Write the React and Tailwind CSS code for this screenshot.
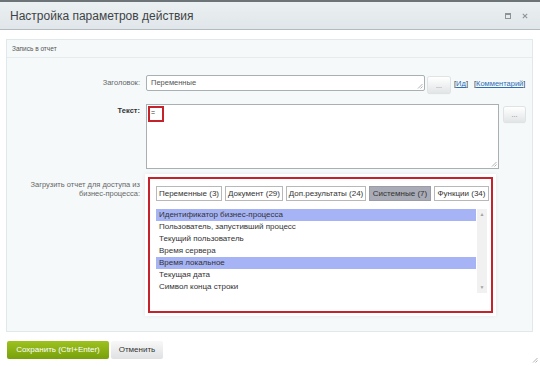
import React from 'react';

const tabs = [
  { label: 'Переменные (3)', w: 'w-[66px]' },
  { label: 'Документ (29)', w: 'w-[58px]' },
  { label: 'Доп.результаты (24)', w: 'w-[80px]' },
  { label: 'Системные (7)', w: 'w-[62px]', active: true },
  { label: 'Функции (34)', w: 'w-[55px]' },
];

const items = [
  { label: 'Идентификатор бизнес-процесса', selected: true },
  { label: 'Пользователь, запустивший процесс' },
  { label: 'Текущий пользователь' },
  { label: 'Время сервера' },
  { label: 'Время локальное', selected: true },
  { label: 'Текущая дата' },
  { label: 'Символ конца строки' },
];

// tiny resize grip used in inputs and the window corner
const Grip = ({ className }) => (
  <svg className={className} width="6" height="6" viewBox="0 0 6 6">
    <path d="M5.5 1 L1 5.5 M5.5 3.5 L3.5 5.5" stroke="#9aa0a3" strokeWidth="0.8" />
  </svg>
);

const DotsButton = ({ className = '' }) => (
  <div className={`flex items-center justify-center rounded-[2px] bg-gradient-to-b from-white to-[#e2e5e6] shadow-[0_0_0_1px_#dfe3e4,0_1px_1px_rgba(0,0,0,0.15)] text-[7px] leading-none text-[#777] ${className}`}>
    ...
  </div>
);

export default function App() {
  return (
    <div className="w-[540px] h-[366px] bg-white relative overflow-hidden font-['Liberation_Sans',Arial,sans-serif]">
      {/* Window header */}
      <div className="h-[30px] border-t-2 border-t-[#6d7477] border-b border-b-[#b4bbbe] bg-gradient-to-b from-[#ebf0f2] to-[#e0e6e9] flex items-center justify-between pl-[10px] pr-[12px]">
        <span className="text-[12px] text-[#3e4346]">Настройка параметров действия</span>
        <div className="flex items-center gap-[11px]">
          <svg width="6" height="6" viewBox="0 0 6 6">
            <rect x="0.5" y="0.5" width="5" height="5" fill="none" stroke="#8d9497" strokeWidth="1" />
            <path d="M0.5 1.5 H5.5" stroke="#8d9497" strokeWidth="1" />
          </svg>
          <svg width="6" height="6" viewBox="0 0 6 6">
            <path d="M0.8 0.8 L5.2 5.2 M5.2 0.8 L0.8 5.2" stroke="#8d9497" strokeWidth="1.1" />
          </svg>
        </div>
      </div>

      <div className="px-[6px] pt-[9px]">
        {/* Settings panel */}
        <div className="w-[527px] h-[293px] border border-[#e1e8ea] bg-[#f5f9fa]">
          <div className="h-[18px] border-b border-[#e6eced] flex items-center pl-[5px] text-[6.5px] text-[#555]">
            Запись в отчет
          </div>

          {/* Row: title */}
          <div className="flex items-start mt-[17px]">
            <div className="w-[133px] h-[16px] flex items-center justify-end text-[7.5px] text-[#666]">Заголовок:</div>
            <div className="ml-[6px] w-[279px] h-[16px] relative rounded-[2px] border border-[#a9b0b3] bg-white flex items-center pl-[4px] text-[7.5px] text-[#555]">
              Переменные
              <Grip className="absolute right-[1px] bottom-[1px]" />
            </div>
            <DotsButton className="ml-[3px] mt-[2px] w-[22px] h-[16px]" />
            <div className="ml-[4px] h-[18px] flex items-center text-[7.5px] text-[#333]">
              [<span className="text-[#2c6db5] underline">Ид</span>]
            </div>
            <div className="ml-[6px] h-[18px] flex items-center text-[7.5px] text-[#333]">
              [<span className="text-[#2c6db5] underline">Комментарий</span>]
            </div>
          </div>

          {/* Row: text */}
          <div className="flex items-start mt-[11px]">
            <div className="w-[133px] pt-[1px] text-right text-[7.5px] font-bold text-[#333]">Текст:</div>
            <div className="ml-[6px] w-[353px] h-[65px] relative border border-[#a9b0b3] bg-white">
              <div className="absolute left-[1px] top-[1px] w-[16px] h-[16px] border-2 border-[#c4232b] text-[7px] leading-none pl-[1px] pt-[1px] text-[#333]">
                =
              </div>
              <Grip className="absolute right-[1px] bottom-[1px]" />
            </div>
            <DotsButton className="ml-[5px] mt-[3px] w-[21px] h-[15px]" />
          </div>

          {/* Row: load report */}
          <div className="flex items-start mt-[8px]">
            <div className="w-[133px] pt-[3px] text-right text-[7.5px] leading-[9px] text-[#666]">
              Загрузить отчет для доступа из<br />бизнес-процесса:
            </div>
            <div className="ml-[8px] w-[345px] h-[136px] border-2 border-[#c4232b] bg-white shadow-[0_0_0_3px_#ffffff,0_0_4px_3px_rgba(0,0,0,0.08)] pt-[7px] pl-[6px]">
              <div className="flex gap-[3px]">
                {tabs.map((tab) => (
                  <div
                    key={tab.label}
                    className={`${tab.w} h-[15px] flex items-center justify-center border text-[8px] text-[#333] ${
                      tab.active ? 'bg-[#a9abb6] border-[#9b9da6]' : 'bg-white border-[#b8b8b8]'
                    }`}
                  >
                    {tab.label}
                  </div>
                ))}
              </div>

              <div className="mt-[8px] w-[331px] h-[84px] flex">
                <div className="flex-1">
                  {items.map((item) => (
                    <div
                      key={item.label}
                      className={`h-[12px] flex items-center pl-[3px] text-[8px] text-[#333] ${item.selected ? 'bg-[#a6b4f5]' : ''}`}
                    >
                      {item.label}
                    </div>
                  ))}
                </div>
                <div className="w-[10px] ml-[1px] bg-[#f1f1f1] flex flex-col items-center justify-between py-[3px] text-[5px] leading-none text-[#a3a3a3]">
                  <span>▲</span>
                  <span>▼</span>
                </div>
              </div>
            </div>
          </div>
        </div>

        {/* Footer buttons */}
        <div className="flex gap-[2px] mt-[9px] ml-[1px]">
          <div className="w-[102px] h-[18px] rounded-[2px] bg-gradient-to-b from-[#9dc21f] to-[#78a00a] flex items-center justify-center text-[8px] text-white">
            Сохранить (Ctrl+Enter)
          </div>
          <div className="w-[52px] h-[18px] rounded-[2px] bg-gradient-to-b from-[#f8f8f8] to-[#dfe1e2] flex items-center justify-center text-[8px] text-[#333]">
            Отменить
          </div>
        </div>
      </div>

      <Grip className="absolute right-[2px] bottom-[3px]" />
    </div>
  );
}
